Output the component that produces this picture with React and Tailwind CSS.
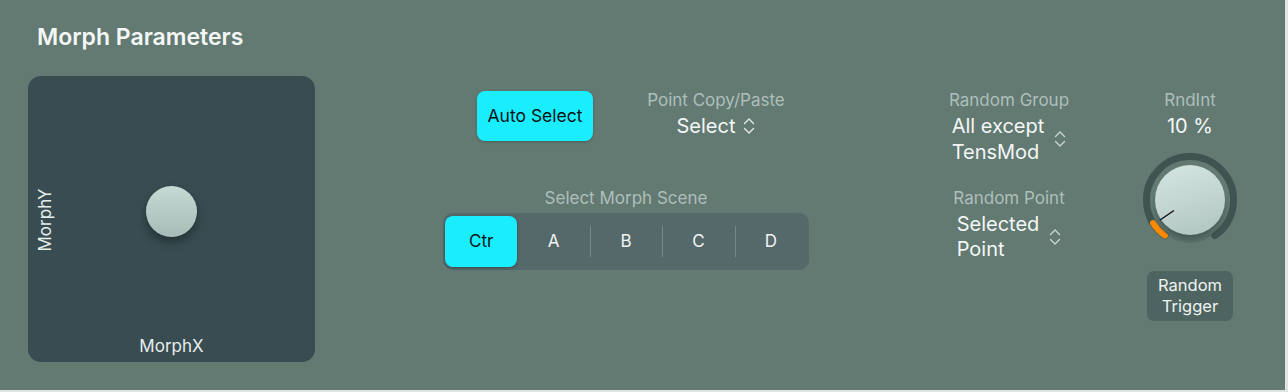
import React from "react";

const F = { fontFamily: "Inter, 'Noto Sans', sans-serif" };

function Chevrons({ className = "" }) {
  return (
    <svg width="12" height="18" viewBox="0 0 12 18" className={className}>
      <path d="M1.5 6.5 L6 2 L10.5 6.5" fill="none" stroke="currentColor" strokeWidth="1.4" strokeLinecap="round" strokeLinejoin="round" />
      <path d="M1.5 11.5 L6 16 L10.5 11.5" fill="none" stroke="currentColor" strokeWidth="1.4" strokeLinecap="round" strokeLinejoin="round" />
    </svg>
  );
}

function pt(cx, cy, r, deg) {
  const a = (deg * Math.PI) / 180;
  return [cx + r * Math.sin(a), cy - r * Math.cos(a)];
}
function arc(cx, cy, r, a0, a1) {
  const [x0, y0] = pt(cx, cy, r, a0);
  const [x1, y1] = pt(cx, cy, r, a1);
  const large = a1 - a0 > 180 ? 1 : 0;
  return `M${x0} ${y0} A${r} ${r} 0 ${large} 1 ${x1} ${y1}`;
}

function Knob() {
  return (
    <svg width="100" height="100" viewBox="0 0 100 100">
      <defs>
        <linearGradient id="kg" x1="0.3" y1="0" x2="0.6" y2="1">
          <stop offset="0" stopColor="#d3e4e0" />
          <stop offset="1" stopColor="#b3c7c2" />
        </linearGradient>
        <radialGradient id="ks" cx="0.5" cy="0.55" r="0.5">
          <stop offset="0.7" stopColor="#2f403f" stopOpacity="0.55" />
          <stop offset="1" stopColor="#2f403f" stopOpacity="0" />
        </radialGradient>
      </defs>
      <path d={arc(50, 50, 43.5, -145, 145)} fill="none" stroke="#3f5351" strokeWidth="7" strokeLinecap="round" />
      <path d={arc(50, 50, 43.5, -145, -122)} fill="none" stroke="#ff8a00" strokeWidth="6" strokeLinecap="round" />
      <circle cx="50" cy="54" r="39" fill="url(#ks)" />
      <circle cx="50" cy="50" r="35" fill="url(#kg)" />
      <line x1="20" y1="70" x2="34" y2="60.5" stroke="#111" strokeWidth="1.5" />
    </svg>
  );
}

export default function App() {
  return (
    <div className="w-[1288px] h-[392px] bg-[#dfe5e3]" style={F}>
      <div className="w-[1285px] h-[390px] bg-[#627a72] flex flex-col">
        <div className="ml-[37px] mt-[23px] h-[28px] leading-[28px] text-[23px] font-semibold text-[#f4f7f6]">
          Morph Parameters
        </div>
        <div className="flex mt-[25px] ml-[28px]">
          {/* XY pad */}
          <div className="relative w-[287px] h-[286px] rounded-[13px] bg-[#384c51] flex flex-col items-center justify-end pb-[6px]">
            <div className="absolute left-[118px] top-[110px] w-[51px] h-[51px] rounded-full bg-gradient-to-b from-[#c6dad5] to-[#a8bcb7] shadow-[0_5px_8px_rgba(20,30,32,0.55)]" />
            <div className="absolute left-[-23px] top-[134px] w-[80px] text-center -rotate-90 text-[17px] leading-[20px] text-[#e6eeeb]">
              MorphY
            </div>
            <div className="text-[17px] leading-[20px] text-[#e6eeeb]">MorphX</div>
          </div>

          {/* middle group */}
          <div className="ml-[128px] w-[366px] flex flex-col pt-[14px]">
            <div className="flex items-start">
              <button className="ml-[34px] mt-[1px] w-[116px] h-[50px] rounded-[8px] bg-[#1aeefe] text-[17.5px] text-[#0b1214] shadow-[0_1px_3px_rgba(0,0,0,0.25)]">
                Auto Select
              </button>
              <div className="ml-[33px] w-[180px] flex flex-col items-center">
                <div className="text-[17px] leading-[20px] text-[#aebfba]">Point Copy/Paste</div>
                <div className="mt-[4px] flex items-center gap-[8px] text-[20px] leading-[24px] text-[#f4f7f6]">
                  <span>Select</span>
                  <Chevrons className="text-[#e4ebe9]" />
                </div>
              </div>
            </div>
            <div className="mt-[47px] text-center text-[17px] leading-[20px] text-[#aebfba]">Select Morph Scene</div>
            <div className="mt-[5px] h-[57px] rounded-[10px] bg-[#56696a] px-[2px] py-[3px] grid grid-cols-5">
              <div className="rounded-[8px] bg-[#1aeefe] flex items-center justify-center text-[17px] text-[#0b1214] shadow-[0_1px_3px_rgba(0,0,0,0.3)]">
                Ctr
              </div>
              {["A", "B", "C", "D"].map((l, i) => (
                <div key={l} className="relative flex items-center justify-center text-[17px] text-[#f0f4f3]">
                  {i > 0 && <div className="absolute left-0 top-[10px] bottom-[10px] w-px bg-[#76898a]" />}
                  {l}
                </div>
              ))}
            </div>
          </div>

          {/* random group column */}
          <div className="ml-[120px] w-[160px] flex flex-col items-center pt-[14px]">
            <div className="text-[17px] leading-[20px] text-[#aebfba]">Random Group</div>
            <div className="mt-[3px] flex items-center gap-[10px] text-[20px] leading-[26px] text-[#f4f7f6]">
              <div>
                All except
                <br />
                TensMod
              </div>
              <Chevrons className="text-[#cbd6d3]" />
            </div>
            <div className="mt-[23px] text-[17px] leading-[20px] text-[#aebfba]">Random Point</div>
            <div className="mt-[4px] flex items-center gap-[10px] text-[20px] leading-[25px] text-[#f4f7f6]">
              <div>
                Selected
                <br />
                Point
              </div>
              <Chevrons className="text-[#cbd6d3]" />
            </div>
          </div>

          {/* RndInt column */}
          <div className="ml-[51px] w-[100px] flex flex-col items-center pt-[14px]">
            <div className="text-[17px] leading-[20px] text-[#aebfba]">RndInt</div>
            <div className="mt-[4px] text-[20px] leading-[24px] text-[#f4f7f6]">10 %</div>
            <div className="mt-[12px]">
              <Knob />
            </div>
            <div className="mt-[21px] w-[86px] h-[50px] rounded-[7px] bg-[#4e6461] flex flex-col items-center justify-center text-[16.5px] leading-[21px] text-[#eef3f1]">
              <span>Random</span>
              <span>Trigger</span>
            </div>
          </div>
        </div>
      </div>
    </div>
  );
}
